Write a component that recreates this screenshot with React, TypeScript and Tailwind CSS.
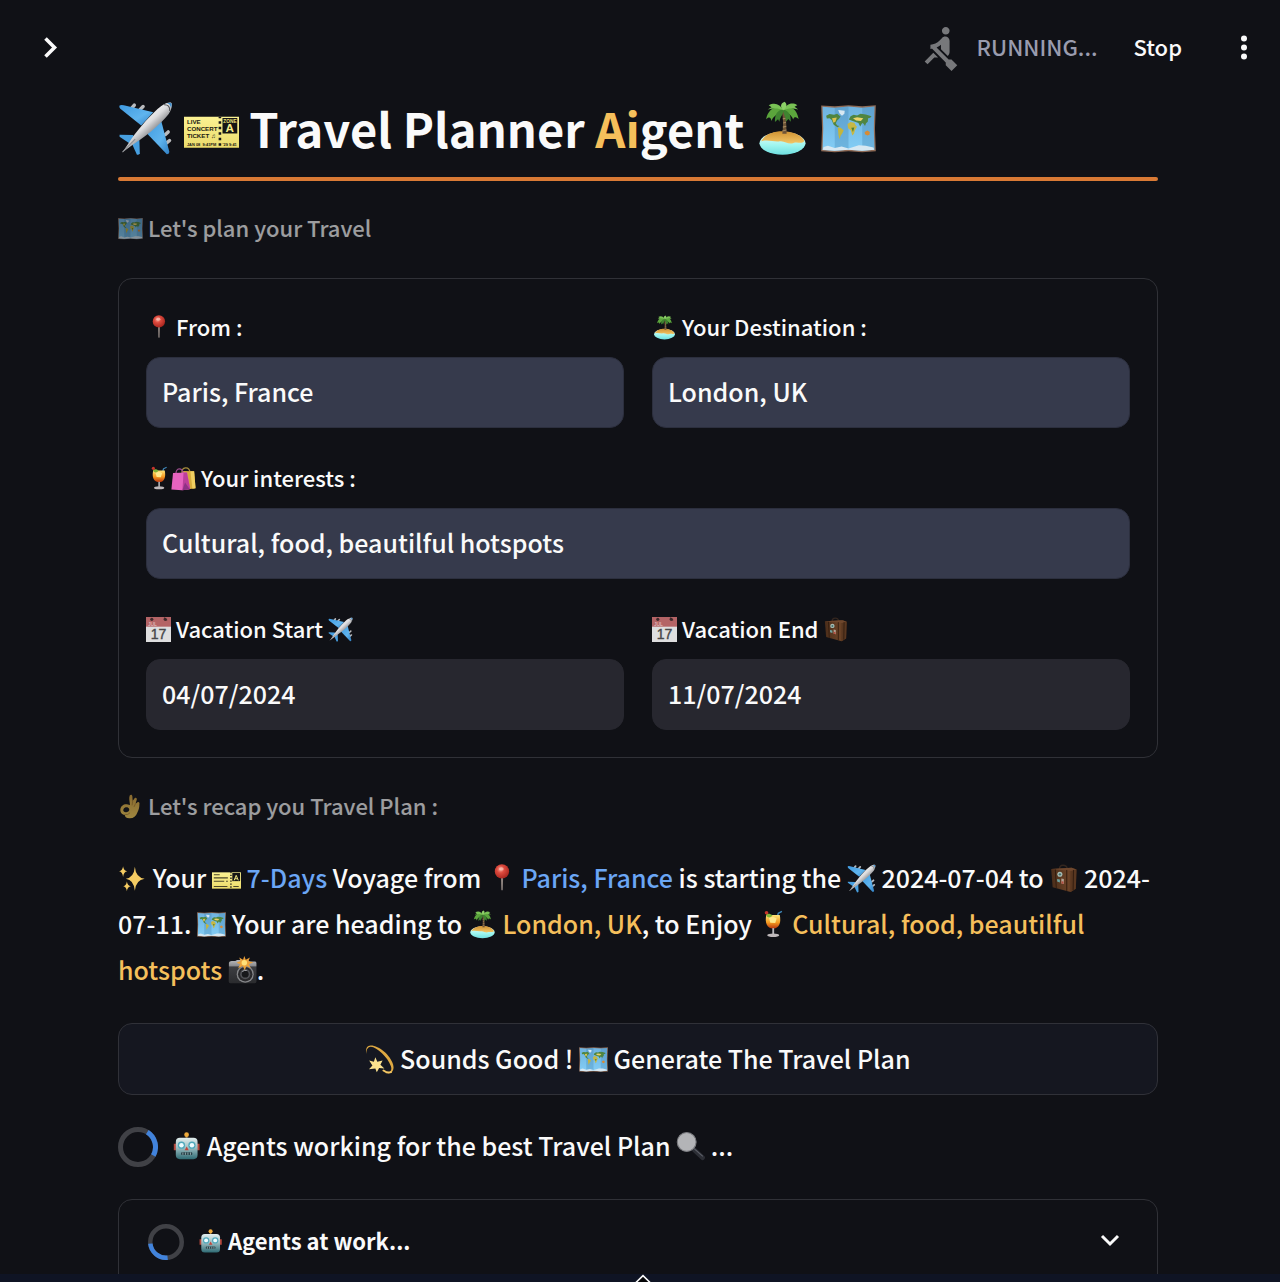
import { useState, type ReactNode } from "react";
import { MdRowing } from "react-icons/md";

type EmojiProps = { label: string; size?: string; children: ReactNode };

const TITLE = "size-[55px] -mb-2";
const BODY = "size-[29px] -mb-[5px]";
const SMALL = "size-[25px] -mb-[4px]";

function Emoji({ label, size = BODY, children }: EmojiProps) {
  return (
    <svg viewBox="0 0 32 32" role="img" aria-label={label} className={"inline-block align-baseline " + size}>
      {children}
    </svg>
  );
}

type Sized = { size?: string };

function Gradients() {
  return (
    <svg aria-hidden="true" className="absolute size-0">
      <defs>
        <linearGradient id="fuselage" x1="0.3" y1="0.3" x2="0.62" y2="0.66">
          <stop offset="0" stopColor="#ffffff" />
          <stop offset="0.5" stopColor="#dcdcde" />
          <stop offset="1" stopColor="#77787c" />
        </linearGradient>
        <linearGradient id="wing" x1="0" y1="0" x2="1" y2="1">
          <stop offset="0" stopColor="#3f9ae0" />
          <stop offset="0.6" stopColor="#5fb4ee" />
          <stop offset="1" stopColor="#2f7fc4" />
        </linearGradient>
        <linearGradient id="ticket" x1="0" y1="0" x2="0" y2="1">
          <stop offset="0" stopColor="#fbf292" />
          <stop offset="1" stopColor="#ecdc6c" />
        </linearGradient>
        <linearGradient id="sand" x1="0" y1="0" x2="0" y2="1">
          <stop offset="0" stopColor="#cf9232" />
          <stop offset="1" stopColor="#f3c667" />
        </linearGradient>
        <linearGradient id="sea" x1="0" y1="0" x2="0" y2="1">
          <stop offset="0" stopColor="#f4fffb" />
          <stop offset="0.6" stopColor="#9df5ee" />
          <stop offset="1" stopColor="#6fdfe0" />
        </linearGradient>
        <linearGradient id="ocean" x1="0" y1="0" x2="0" y2="1">
          <stop offset="0" stopColor="#6fb3e0" />
          <stop offset="1" stopColor="#83cdf5" />
        </linearGradient>
        <radialGradient id="pinhead" cx="0.4" cy="0.35" r="0.65">
          <stop offset="0" stopColor="#f9a595" />
          <stop offset="0.4" stopColor="#dd4a3e" />
          <stop offset="1" stopColor="#a8261f" />
        </radialGradient>
        <linearGradient id="juice" x1="0" y1="0" x2="0" y2="1">
          <stop offset="0" stopColor="#ffe57a" />
          <stop offset="0.55" stopColor="#f59a20" />
          <stop offset="1" stopColor="#b8330e" />
        </linearGradient>
        <linearGradient id="robot" x1="0" y1="0" x2="0" y2="1">
          <stop offset="0" stopColor="#e2eeee" />
          <stop offset="0.45" stopColor="#9fc0c4" />
          <stop offset="1" stopColor="#2f6b74" />
        </linearGradient>
        <linearGradient id="gold" x1="0" y1="0" x2="0" y2="1">
          <stop offset="0" stopColor="#d9a640" />
          <stop offset="1" stopColor="#ffd65c" />
        </linearGradient>
        <linearGradient id="leather" x1="0" y1="0" x2="1" y2="0">
          <stop offset="0" stopColor="#4a2d1a" />
          <stop offset="0.7" stopColor="#6b4327" />
          <stop offset="1" stopColor="#3a2213" />
        </linearGradient>
        <linearGradient id="camera" x1="0" y1="0" x2="0" y2="1">
          <stop offset="0" stopColor="#b9babd" />
          <stop offset="0.25" stopColor="#8b8c90" />
          <stop offset="0.3" stopColor="#3d3e42" />
          <stop offset="1" stopColor="#2a2b2e" />
        </linearGradient>
      </defs>
    </svg>
  );
}

function Plane({ size }: Sized) {
  return (
    <Emoji label="airplane" size={size}>
      <g stroke="#b9babd" strokeWidth="2" strokeLinecap="round">
        <path d="M8 4.2 9.5 2.4M12.8 5 14.6 3.2M27.6 19.5 29.2 18M28.3 24.4 30 23" />
      </g>
      <path d="M.9 2.6Q1.8 2 3.4 2.5L20.5 6.5 13.5 14.2 1.2 4.4Q.5 3.4.9 2.6Z" fill="url(#wing)" />
      <path d="M25 11 29.9 29.6Q29.7 30.9 28.4 31L16.6 18.6Z" fill="url(#wing)" />
      <path d="M.9 19.6 8.6 19.8 10.4 21.6 7 24.8.9 20.8Z" fill="#479fe0" />
      <path d="M12.4 21.6 12.7 30.6Q12 31.6 11 31.2L8.2 25Z" fill="#479fe0" />
      <path d="M2.6 29.8 8 21.8C12 16 20 6.8 25 3 28 .8 30.5.5 31.1 1.1 31.7 2 31.2 5 29.5 7.5 25.4 12.6 17 20 10.6 24Z" fill="url(#fuselage)" />
      <path d="M2.6 29.8 10 22.2" stroke="#8d8e91" strokeWidth=".6" />
      <path d="M26.8 2.2Q30.3 2 30.1 5.8" fill="none" stroke="#4d4e52" strokeWidth=".6" />
      <path d="M28.4 1.3Q31 .6 31.2 1.7 31.3 2.7 30.8 4Q30.5 1.8 28.4 1.3Z" fill="#3c8fd0" />
    </Emoji>
  );
}

function Ticket({ size, detailed = false }: Sized & { detailed?: boolean }) {
  return (
    <Emoji label="ticket" size={size}>
      <path d="M0 9.2H32V27.2H0Z" fill="url(#ticket)" />
      <path d="M20.9 9.2V27.2" stroke="#17171a" strokeWidth="1.5" strokeDasharray="1.5 1.7" strokeDashoffset=".6" />
      <path d="M22.4 9.9H31V18.9H22.4Z" fill="#151515" />
      {detailed ? (
        <g fill="#1b1a12" fontFamily="Liberation Sans, sans-serif" fontWeight="700">
          <text x="1.7" y="13.2" fontSize="3.6">LIVE</text>
          <text x="1.7" y="17.3" fontSize="3.6">CONCERT</text>
          <text x="1.7" y="21.4" fontSize="3.6">TICKET ♫</text>
          <text x="1.7" y="25.9" fontSize="2.3">JAN 08 &nbsp;9:41PM</text>
          <text x="22.4" y="25.9" fontSize="2.3">&#39;29 9:41</text>
          <text x="22.9" y="12.6" fontSize="2.8" fill="#efe27a">ZONE</text>
          <text x="24.2" y="18.3" fontSize="6.8" fill="#f8ee8c">A</text>
        </g>
      ) : (
        <g>
          <path d="M2 11.9H8.5M2 15.4H17.5M2 19H13.5M15.5 19H17.5M2 24.8H17M23.5 24.8H29.5" stroke="#4b472a" strokeWidth="1.3" />
          <path d="M24.5 18 26.7 12.5 29 18M25.2 16.3H28.2" fill="none" stroke="#f5ea86" strokeWidth="1.1" />
        </g>
      )}
    </Emoji>
  );
}

function Island({ size }: Sized) {
  return (
    <Emoji label="desert island" size={size}>
      <ellipse cx="16" cy="24.6" rx="13.4" ry="6.6" fill="url(#sea)" />
      <path d="M3.6 23.4C6 18.8 12 17.4 16.5 17.6 21.5 17.7 27 19.6 28.7 23.2 27 25.4 25 23.5 22.4 24.4 19.5 25.7 17.5 23 14.5 23.4 11 24 8 22.2 3.6 23.4Z" fill="url(#sand)" />
      <path d="M15.9 19C16.6 14 16.4 10.5 15.6 6L17.6 5.8C18.2 11 18.2 15 18.4 19Z" fill="#6e5437" />
      <path d="M15.9 17.5 18.3 16.9M16.2 15.2 18.2 14.7M16.4 12.8 18 12.4M16.2 10.4 17.9 10" stroke="#a58a60" strokeWidth=".6" />
      <g fill="#5ba53c">
        <path d="M16.5 5C12 2.6 8 4 6.4 10.6 8 9.4 9 9 9.6 11.6 11 8 13.6 8 16.5 5Z" />
        <path d="M16.5 5C21 2.6 24 4.2 25.4 10.4 23.8 9.3 22.8 9 22.2 10.8 21 7.4 19 8 16.5 5Z" />
        <path d="M16.5 5C13 5.2 11.4 8 11.6 12.2L13.4 10.6 14.2 12C14.6 9 16.8 8 16.5 5ZM16.5 5C20 6 21 8.6 20.8 12L19.4 10.4 18 12C18 9 16.4 8 16.5 5Z" fill="#3f8430" />
        <path d="M16.5 5.4C14.6 2 11.8.5 8 2.4L9.6 3.6 7.4 5C10.6 4.2 13.4 4 16.5 5.4ZM16.5 5.4C18.4 2 21 .4 24.6 2.4L23 3.4 25.2 5C22.2 4.2 19.4 4 16.5 5.4Z" fill="#79c255" />
        <path d="M16.5 5.4C14.4 3.6 14.8 1.4 17.2.5 19 2 18.5 4 16.5 5.4Z" fill="#8cd067" />
      </g>
    </Emoji>
  );
}

function WorldMap({ size }: Sized) {
  return (
    <Emoji label="world map" size={size}>
      <path d="M.1 2.6 8 3.1 16 2.4 24 3.1 31.9 2.4 31.4 16 31.9 29.2 24 29.8 16 29.2 8 29.8.1 29.3.6 16Z" fill="#8e6a55" />
      <path d="M.9 3.4 8 3.9 16 3.2 24 3.9 31.1 3.2 30.7 16 31.1 28.4 24 29 16 28.4 8 29 .9 28.5 1.3 16Z" fill="url(#ocean)" />
      <path d="M8 3.9 16 3.2V28.4L8 29ZM24 3.9 31.1 3.2 30.7 16 31.1 28.4 24 29Z" fill="#2f6f9e" fillOpacity=".25" />
      <path d="M10 5.2 13.8 5.6 13.6 7.4 12.2 8.6 10.8 7.2ZM1.5 26.8 4 26 8 27.4 12 26.4 16 27.6 22 25.8 26 26 30.5 27 31 28.3 24 29 16 28.4 8 29 1 28.4Z" fill="#d7e8f2" />
      <path d="M3 8.6 5 7.6 7.6 8 9.4 7.4 11.4 9 10.4 10.4 9.4 11.4 8.6 13 9.4 14.2 10.8 14.6 9.6 15.2 7.4 13.8 6.2 11 5 10 3.4 10.2Z" fill="#4f8540" />
      <path d="M6.4 10 9.2 9.6 8.4 12 7.2 12.6Z" fill="#dcc14f" />
      <path d="M9.8 15.4 11.4 15.6 13.2 17 12.4 18.8 11.4 20.2 10.8 22.2 10.2 20Z" fill="#c4b53c" />
      <path d="M16.2 10.8 17.2 8.8 19 8 21 8.4 23 7.4 26 7.8 29.4 8.8 28.6 9.8 27.4 10 27.2 12 26.2 13 25.6 14.6 24.8 13.2 24 12.8 22.8 14.8 21.8 12.8 20.6 12.4 18.4 11.6Z" fill="#4f8540" />
      <path d="M15.4 13.4 17.2 12.2 19.4 12.6 20.4 14.6 21 15 19.8 16.8 19.2 19 18.2 20 17.4 17.2 15.8 15.8Z" fill="#c7b845" />
      <path d="M18.6 10 21 9.4 24.6 10 23.2 11.6 20.4 11.4Z" fill="#ecd36a" />
      <path d="M25.4 18 27 17.2 28.4 18 28.2 19.6 27 20 25.6 19.4Z" fill="#d98b33" />
      <path d="M17.6 15.6 19.4 15.4 18.6 18Z" fill="#4d7d35" />
    </Emoji>
  );
}

function Pin({ size }: Sized) {
  return (
    <Emoji label="pin" size={size}>
      <path d="M15.4 14H17.8L17.4 28.4Q16.6 30 15.8 28.4Z" fill="#8f8580" />
      <circle cx="16.5" cy="8.2" r="7.9" fill="url(#pinhead)" />
      <ellipse cx="15.8" cy="5.4" rx="2.6" ry="1.9" fill="#fbc5b8" fillOpacity=".7" />
    </Emoji>
  );
}

function Drink({ size }: Sized) {
  return (
    <Emoji label="cocktail" size={size}>
      <path d="M20.6 10 22.4 3.6 26.4 1.6" fill="none" stroke="#3f87b8" strokeWidth="1.6" />
      <path d="M9.2 5.6C7.2 14 9.8 20.4 16.8 20.6 24 20.4 25.6 13 24 5.6Z" fill="url(#juice)" />
      <path d="M12 8.4C15 7 19 7.6 20.6 9.4L19 14.4 13.6 14Z" fill="#ffe98c" />
      <path d="M8.8 5.4C10 3.6 14 4 16 6 13.6 9.2 10.4 8.8 8.8 5.4Z" fill="#7fb437" />
      <circle cx="9.4" cy="3" r="2" fill="#c7352b" />
      <path d="M15.8 20H17.8V26.6H15.8Z" fill="#b8b8bb" />
      <ellipse cx="16.8" cy="27.8" rx="6.6" ry="2" fill="#bfb9bb" />
    </Emoji>
  );
}

function Bags({ size }: Sized) {
  return (
    <Emoji label="shopping bags" size={size}>
      <path d="M14 9C13.4 1 23 0 24.4 8" fill="none" stroke="#a58b3c" strokeWidth="1.6" />
      <path d="M14 6.4 29.6 6.8 31.4 28.4 20 30Z" fill="#d6ab3c" />
      <path d="M24.8 6.8 29.6 6.8 31.4 28.4 27.4 29Z" fill="#f0cf61" />
      <path d="M6.4 10C6 2 14.4 1.6 15.6 9.6" fill="none" stroke="#9c4c8c" strokeWidth="1.6" />
      <path d="M2.6 8.8 20.4 8.2 24.6 29.4 14 31 .5 30Z" fill="#e763c0" />
      <path d="M16 8.4 20.4 8.2 24.6 29.4 14.6 31Z" fill="#bd3f9b" />
      <path d="M18 21 23.9 29.6 14.6 31Z" fill="#8e3285" />
    </Emoji>
  );
}

function Calendar({ size }: Sized) {
  return (
    <Emoji label="calendar" size={size}>
      <path d="M0 0H32V32H0Z" fill="#dededf" />
      <path d="M0 0H32V12.4H0Z" fill="#b46466" />
      <circle cx="7.4" cy="3" r="2" fill="#3f2a2c" />
      <circle cx="24.6" cy="3" r="2" fill="#3f2a2c" />
      <path d="M23 1 27 4.4" stroke="#3f2a2c" strokeWidth="1.4" />
      <text x="2.4" y="11.2" fontSize="6.5" fill="#e8c9ca" fontFamily="Liberation Sans, sans-serif">JUL</text>
      <text x="16" y="28.2" fontSize="18" textAnchor="middle" fill="#47474a" stroke="#47474a" strokeWidth=".5" fontFamily="Liberation Sans, sans-serif">17</text>
    </Emoji>
  );
}

function Luggage({ size }: Sized) {
  return (
    <Emoji label="luggage" size={size}>
      <path d="M11.6 5.4C11.6 0 19 0 20.2 5" fill="none" stroke="#33261f" strokeWidth="1.6" />
      <path d="M2.4 5.4 25 4 30.4 6 29.6 27.4 23.8 31 4 25.6Z" fill="url(#leather)" />
      <path d="M24.2 7.2 30.4 6 29.6 27.4 23.8 31Z" fill="#593720" />
      <path d="M2.4 5.4 25 4 30.4 6 24.2 7.6Z" fill="#6f472d" />
      <path d="M7 6 8 26.6M19.6 6.6 19.6 29.8M27 6.6 26.6 29" stroke="#2d190d" strokeWidth="1" />
      <circle cx="12" cy="11.4" r="2.8" fill="#a7bdb5" />
      <circle cx="12" cy="11.4" r="1.3" fill="#47716e" />
      <path d="M9 16.6 12 17.2V20.4L9 19.4Z" fill="#6fa3a0" />
      <path d="M13.6 16 16.4 16.6V22.2L13.6 21.4Z" fill="#b3a192" />
      <path d="M13.8 19 16 19.4V22L13.8 21.4Z" fill="#b34a3c" />
    </Emoji>
  );
}

function OkHand({ size }: Sized) {
  return (
    <Emoji label="OK hand" size={size}>
      <path d="M15.4 14C14.6 9 13.8 5 15 2 16.4.2 18.2.8 18.4 3.2L18.8 9 21.2 5.4C22.6 4 24.6 5.2 24 7.4L22.4 12.4 25 10.4C27 9.6 28 11.4 27.4 13.4 27.4 17 26.6 20.4 24.8 23.6 23 28.6 19.4 31.4 14.4 31 10.4 31 8.6 29 8.6 26.6 4.6 26.4 2.6 23 3 19.4 3.6 15.4 7.4 12.6 11.4 13.2Z" fill="url(#gold)" />
      <path d="M7 19.4C8.4 16.6 12.4 16.4 14 18.6 15.2 21 13.4 23 10.6 23.2 7.6 23.4 6 21.6 7 19.4Z" fill="#14151a" />
      <path d="M18.8 9 18 14.6M22.4 12.4 20.4 16.6M9 26.4Q13 27 15.4 24" fill="none" stroke="#a87b2a" strokeWidth=".9" />
    </Emoji>
  );
}

function Sparkles({ size }: Sized) {
  return (
    <Emoji label="sparkles" size={size}>
      <g fill="#f4cb62">
        <path d="M18.6 3Q19.6 15 29.4 16.2 19.6 17.4 18.6 29.6 17.6 17.4 8.6 16.2 17.6 15 18.6 3Z" />
        <path d="M5.6 2.4Q6.2 7.4 10.2 8 6.2 8.6 5.6 14.4 5 8.6 1.2 8 5 7.4 5.6 2.4Z" />
        <path d="M9.8 19.4Q10.4 24 14.2 24.6 10.4 25.2 9.8 30 9.2 25.2 5.8 24.6 9.2 24 9.8 19.4Z" />
      </g>
    </Emoji>
  );
}

function Camera({ size }: Sized) {
  return (
    <Emoji label="camera with flash" size={size}>
      <path d="M1 7.4Q1.4 5.6 4 5.6H8L10 4.4H22L24 6.2H30Q31.4 6.4 31.4 8.4V28Q31.4 30 29.4 30H2.6Q.8 30 .8 28Z" fill="url(#camera)" />
      <circle cx="19" cy="20" r="9.4" fill="#86878a" />
      <circle cx="19" cy="20" r="8" fill="#29292c" />
      <circle cx="19" cy="20" r="5.6" fill="#515257" />
      <circle cx="19" cy="20" r="3.8" fill="#17181b" />
      <path d="M15.8 17.2Q18 15.2 20.6 16" fill="none" stroke="#b0b1b5" strokeWidth="1" />
      <path d="M18 0 19.6 4 24.2 1.6 22.4 5.8 28 7 23 9 25.2 13.4 20.4 11 18.4 15.6 16.4 11 11.2 13.4 13.4 9 9.4 7.4 13.8 5.6 12.4 1.6 16.6 4Z" fill="#eba13a" />
      <circle cx="18" cy="7.4" r="3" fill="#ffe079" />
    </Emoji>
  );
}

function Dizzy({ size }: Sized) {
  return (
    <Emoji label="dizzy" size={size}>
      <path d="M1.6 10C.4 4.6 1.6 1 6 .6 15 .2 28 11 31 21.4 33 29 28.6 32.4 22.4 31 27.4 30.6 30.2 28.4 28.6 23.4 25 13.4 13.4 2.6 6.4 2 2.8 2.2 1.4 5.4 1.6 10Z" fill="#dfa942" />
      <path d="M11.4 13.6 13.6 18.4 19.4 17 17 21.8 21.4 26 15.6 25.4 13 30 11.4 25.8 4.4 26.8 8.2 22.6 4.6 17.2 9.8 18.6Z" fill="#fae18e" />
      <path d="M20.4 28.2Q25 31.4 28.6 30" fill="none" stroke="#f3c764" strokeWidth="2.2" strokeLinecap="round" />
    </Emoji>
  );
}

function Robot({ size }: Sized) {
  return (
    <Emoji label="robot" size={size}>
      <path d="M15 3H17.2V7H15Z" fill="#8a6532" />
      <circle cx="16.1" cy="3" r="2.6" fill="#edaa3c" />
      <path d="M2 13H6V20H2ZM26.4 13H30.4V20H26.4Z" fill="#b5473c" />
      <rect x="4.2" y="6.4" width="24" height="23.6" rx="4.5" fill="url(#robot)" />
      <circle cx="10.4" cy="14.6" r="4" fill="#4fa8bb" />
      <circle cx="22" cy="14.6" r="4" fill="#4fa8bb" />
      <circle cx="10.4" cy="14.6" r="2.5" fill="#eefcff" />
      <circle cx="22" cy="14.6" r="2.5" fill="#eefcff" />
      <path d="M16.2 16 18.4 20H14Z" fill="#c54339" />
      <rect x="10" y="22.4" width="12.4" height="3" rx="1" fill="#27424a" />
      <path d="M12 22.6V25.2M14.8 22.6V25.2M17.6 22.6V25.2M20.4 22.6V25.2" stroke="#a9bcbe" strokeWidth=".9" />
    </Emoji>
  );
}

function Magnifier({ size }: Sized) {
  return (
    <Emoji label="magnifying glass" size={size}>
      <path d="M20 19.6 29.4 28.4" stroke="#2c2e35" strokeWidth="5" strokeLinecap="round" />
      <path d="M20 18.4 29.6 27" stroke="#5c5f68" strokeWidth="1.2" />
      <circle cx="11.8" cy="11" r="10.4" fill="#b3b4b7" stroke="#7b7c80" strokeWidth="1.2" />
    </Emoji>
  );
}

function Spinner({ className, arc }: { className: string; arc: string }) {
  return (
    <svg viewBox="0 0 40 40" fill="none" strokeWidth="5" aria-hidden="true" className={"shrink-0 " + className}>
      <circle cx="20" cy="20" r="17.5" stroke="#404146" />
      <path d={arc} stroke="#4183dc" />
    </svg>
  );
}

type FieldProps = { id: string; label: ReactNode; initial: string; className?: string; tone?: string };

function Field({ id, label, initial, className = "", tone = "bg-[#363a4c] border-[#2c2f3e]" }: FieldProps) {
  const [value, setValue] = useState(initial);
  return (
    <div className={"flex flex-col gap-[11px] " + className}>
      <label htmlFor={id} className="block whitespace-nowrap text-[22px] leading-[40px]">
        {label}
      </label>
      <input
        id={id}
        type="text"
        value={value}
        onChange={(event) => setValue(event.target.value)}
        className={"h-[71px] w-full rounded-[14px] border px-[15px] pb-1 text-[25px] outline-none focus:border-[#d97a35] " + tone}
      />
    </div>
  );
}

const DATE_TONE = "bg-[#27272f] border-[#27272f]";

export default function App() {
  const [open, setOpen] = useState(false);

  return (
    <div className="flex h-screen flex-col overflow-hidden bg-[#101116] font-['Noto_Sans_CJK_SC',sans-serif] text-[25px] font-medium text-[#fafafa]">
      <Gradients />
      <header className="flex h-[93px] shrink-0 items-center justify-between pl-9 pr-7 pt-[3px]">
        <button type="button" aria-label="Open sidebar" className="flex size-7 items-center justify-center">
          <svg viewBox="0 0 28 28" className="size-7" fill="none" stroke="#fafafa" strokeWidth="3.6">
            <path d="M9.5 4.5 18.5 13.5 9.5 22.5" />
          </svg>
        </button>
        <div className="flex items-center text-[22px]">
          <MdRowing className="mr-[14px] size-[46px] text-[#77787b]" aria-hidden="true" />
          <span className="mr-9 pb-1 text-[#9a9cae]">RUNNING...</span>
          <button type="button" className="mr-[54px] pb-1">Stop</button>
          <button type="button" aria-label="Menu" className="flex w-4 justify-center">
            <svg viewBox="0 0 8 28" className="h-7 w-2" fill="#fafafa">
              <circle cx="4" cy="4.5" r="3" />
              <circle cx="4" cy="13.5" r="3" />
              <circle cx="4" cy="22.5" r="3" />
            </svg>
          </button>
        </div>
      </header>

      <main className="min-h-0 flex-1 overflow-hidden pl-[118px] pr-[122px]">
        <h1 className="whitespace-nowrap text-[47px] font-bold leading-[70px]">
          <Plane size={TITLE} /> <Ticket size={TITLE} detailed /> Travel Planner{" "}
          <span className="text-[#f5bf5b]">Ai</span>gent <Island size={TITLE} /> <WorldMap size={TITLE} />
        </h1>
        <hr className="mt-[14px] h-1 rounded-full border-0 bg-[#d97a35]" />
        <p className="mt-[26px] text-[22px] leading-[40px] opacity-60">
          <WorldMap size={SMALL} /> Let&#39;s plan your Travel
        </p>

        <form className="mt-[31px] grid grid-cols-2 gap-x-7 gap-y-[29px] rounded-[14px] border border-[#303137] p-[27px]">
          <Field id="origin" initial="Paris, France" label={<><Pin size={SMALL} /> From :</>} />
          <Field id="destination" initial="London, UK" label={<><Island size={SMALL} /> Your Destination :</>} />
          <Field
            id="interests"
            initial="Cultural, food, beautilful hotspots"
            className="col-span-2"
            label={<><Drink size={SMALL} /><Bags size={SMALL} /> Your interests :</>}
          />
          <Field
            id="start"
            initial="04/07/2024"
            tone={DATE_TONE}
            label={<><Calendar size={SMALL} /> Vacation Start <Plane size={SMALL} /></>}
          />
          <Field
            id="end"
            initial="11/07/2024"
            tone={DATE_TONE}
            label={<><Calendar size={SMALL} /> Vacation End <Luggage size={SMALL} /></>}
          />
        </form>

        <p className="mt-[27px] text-[22px] leading-[40px] opacity-60">
          <OkHand size={SMALL} /> Let&#39;s recap you Travel Plan :
        </p>

        <p className="mt-[29px] leading-[46px]">
          <Sparkles /> Your <Ticket /> <span className="text-[#6ba6f5]">7-Days</span> Voyage from <Pin />{" "}
          <span className="text-[#6ba6f5]">Paris, France</span> is starting the <Plane /> 2024-07-04 to <Luggage /> 2024-
          <wbr />
          07-11. <WorldMap /> Your are heading to <Island /> <span className="text-[#f5bf5b]">London, UK</span>, to Enjoy{" "}
          <Drink /> <span className="text-[#f5bf5b]">Cultural, food, beautilful hotspots</span> <Camera />.
        </p>

        <button
          type="button"
          className="mt-[31px] block h-[72px] w-full rounded-[14px] border border-[#303138] bg-[#151720]"
        >
          <Dizzy /> Sounds Good ! <WorldMap /> Generate The Travel Plan
        </button>

        <div role="status" className="mt-[29px] flex h-[46px] items-center gap-[14px]">
          <Spinner className="size-10" arc="M29.3 5.2A17.5 17.5 0 0 1 35.3 28.5" />
          <p className="pb-1 leading-[42px]">
            <Robot /> Agents working for the best Travel Plan <Magnifier /> ...
          </p>
        </div>

        <div className="mt-[29px] h-40 rounded-[14px] border border-[#303137]">
          <button
            type="button"
            aria-expanded={open}
            onClick={() => setOpen(!open)}
            className="flex h-[84px] w-full items-center pl-[29px] pr-[36px] text-[22px] font-bold"
          >
            <Spinner className="size-9" arc="M21.8 37.4A17.5 17.5 0 0 1 2.6 21.8" />
            <span className="ml-[14px] pb-1">
              <Robot size={SMALL} /> Agents at work...
            </span>
            <svg viewBox="0 0 22 22" className="ml-auto size-[22px]" fill="none" stroke="#fafafa" strokeWidth="3">
              <path d="M3 5 11 13 19 5" />
            </svg>
          </button>
        </div>
      </main>

      <footer className="flex h-2 shrink-0 justify-center overflow-hidden bg-[#0f1424] pl-1.5">
        <svg viewBox="0 0 20 8" className="h-2 w-5" fill="#050507" stroke="#fafafa" strokeWidth="1.6">
          <path d="M2.5 9 10 1.6 17.5 9" />
        </svg>
      </footer>
    </div>
  );
}
